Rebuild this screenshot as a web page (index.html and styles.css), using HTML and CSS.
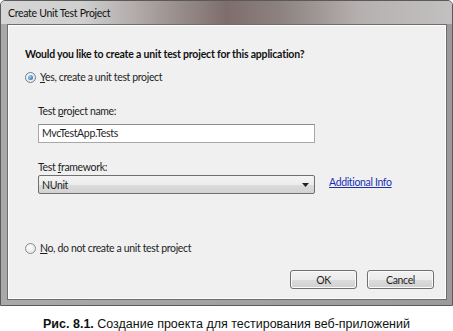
FILE: index.html
```html
<!DOCTYPE html>
<html>
<head>
<meta charset="utf-8">
<link rel="stylesheet" href="styles.css">
</head>
<body>
<div class="window">
  <div class="titlebar"><span class="title">Create Unit Test Project</span></div>
  <div class="client">
    <div class="question">Would you like to create a unit test project for this application?</div>
    <label class="radio-row yes">
      <span class="radio checked"><span class="dot"></span></span>
      <span><u>Y</u>es, create a unit test project</span>
    </label>
    <div class="fields">
      <div class="label">Test <u>p</u>roject name:</div>
      <div class="textbox">MvcTestApp.Tests</div>
      <div class="label fw">Test <u>f</u>ramework:</div>
      <div class="select-row">
        <div class="select">
          <span>NUnit</span>
          <svg class="arrow" width="7" height="4" viewBox="0 0 7 4"><path d="M0 0h7L3.5 4z" fill="#222"/></svg>
        </div>
        <a class="link">Additional Info</a>
      </div>
    </div>
    <label class="radio-row no">
      <span class="radio"></span>
      <span><u>N</u>o, do not create a unit test project</span>
    </label>
    <div class="buttons">
      <div class="btn">OK</div>
      <div class="btn">Cancel</div>
    </div>
  </div>
</div>
<div class="caption"><b>Рис. 8.1.</b> Создание проекта для тестирования веб-приложений</div>
</body>
</html>
```

FILE: styles.css
```css
html, body { margin: 0; padding: 0; background: #fff; }
body { width: 453px; height: 331px; overflow: hidden; font-family: Lato, "Open Sans", sans-serif; font-size: 10.5px; letter-spacing: -0.35px; color: #1e1e1e; }
.window {
  width: 453px; height: 306px; box-sizing: border-box;
  border: 1px solid #5a5a5a; border-radius: 5px 5px 0 0;
  background: linear-gradient(90deg, #a9a9a9 0%, #9c9a9a 100%);
  display: flex; flex-direction: column;
  padding: 0 5px 5px 6px;
}
.titlebar {
  height: 23px; flex: none; margin: 0 -5px 0 -6px; padding-left: 7px;
  display: flex; align-items: center;
  background: linear-gradient(90deg, #d6d6d6 0%, #cfcfcf 18%, #a49b99 35%, #7e6e6b 50%, #8d8280 62%, #b6b1b0 80%, #c2c0c0 100%);
  border-radius: 4px 4px 0 0;
}
.title { font-size: 10.5px; letter-spacing: -0.3px; color: #111; }
.client {
  flex: 1; background: #f0f0f0; border: 1px solid #6d6d6d;
  box-shadow: inset 0 0 0 1px #fdfdfd;
  padding: 0 0 0 17px; display: flex; flex-direction: column; position: relative;
}
.question { font-weight: 700; font-size: 10.5px; letter-spacing: -0.2px; margin-top: 23px; color: #111; }
.radio-row { display: flex; align-items: center; gap: 4px; }
.yes { margin-top: 11px; }
.radio {
  width: 11px; height: 11px; border-radius: 50%; box-sizing: border-box;
  border: 1px solid #8c8c8c; background: radial-gradient(circle at 40% 40%, #fff, #dcdcdc);
  display: flex; align-items: center; justify-content: center;
}
.radio.checked { border-color: #6a7f96; }
.dot { width: 5px; height: 5px; border-radius: 50%; background: radial-gradient(circle at 35% 35%, #9fd0f5, #1e5b9c); }
.fields { padding-left: 13px; margin-top: 21px; }
.label { line-height: 14px; }
.textbox {
  margin-top: 6px; width: 277px; height: 19px; box-sizing: border-box;
  border: 1px solid #a8a8a8; border-top-color: #8e8e8e; background: #fff;
  padding: 1px 3px; line-height: 15px;
}
.fw { margin-top: 17px; }
.select-row { display: flex; align-items: center; gap: 14px; margin-top: 1px; }
.select {
  width: 277px; height: 19px; box-sizing: border-box; border: 1px solid #707070; border-radius: 2px;
  background: linear-gradient(#f4f4f4 0%, #ececec 50%, #dcdcdc 51%, #d2d2d2 100%);
  display: flex; align-items: center; justify-content: space-between; padding: 0 4px 0 3px;
}
.arrow { margin-right: 1px; }
.link { color: #1a30b0; text-decoration: underline; margin-top: -5px; }
.no { margin-top: 48px; }
.buttons { display: flex; justify-content: flex-end; gap: 10px; margin-top: 16px; padding-right: 12px; }
.btn {
  width: 67px; height: 19px; box-sizing: border-box; border: 1px solid #707070; border-radius: 3px;
  background: linear-gradient(#f2f2f2 0%, #ebebeb 50%, #dddddd 51%, #cfcfcf 100%);
  box-shadow: inset 0 0 0 1px #fafafa;
  display: flex; align-items: center; justify-content: center;
}
.caption {
  font-family: "Liberation Sans", Arial, sans-serif; font-size: 12.5px; letter-spacing: 0; text-align: center;
  margin-top: 11px; color: #111;
}
```
